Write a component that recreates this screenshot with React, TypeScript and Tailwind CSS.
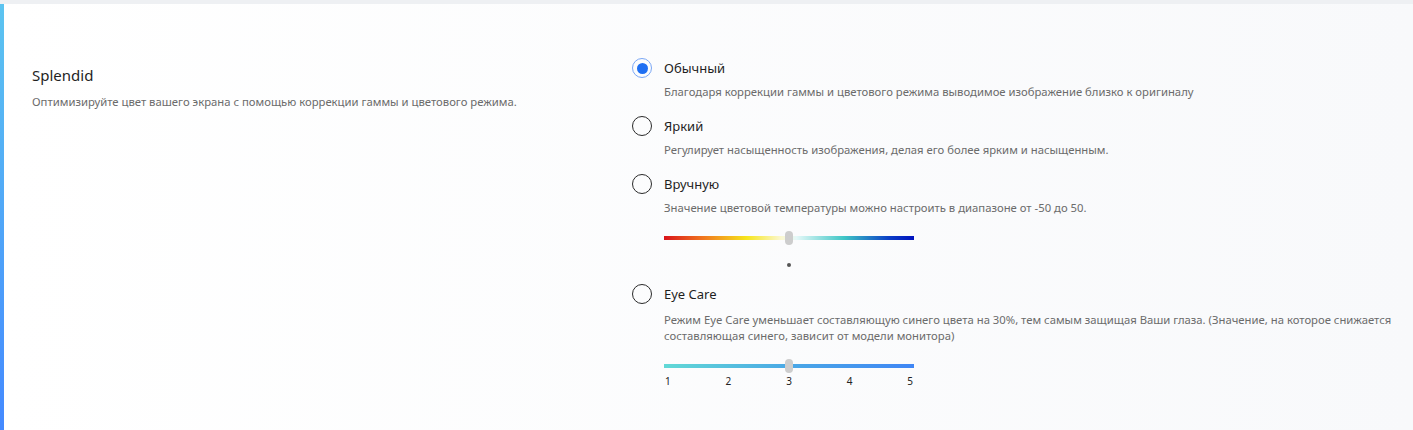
import React from "react";

function Radio({ checked }: { checked?: boolean }) {
  if (checked) {
    return (
      <div className="w-5 h-5 rounded-full border border-[#7aa7f5] flex items-center justify-center shrink-0">
        <div className="w-[11px] h-[11px] rounded-full bg-[#1f6ff2]" />
      </div>
    );
  }
  return <div className="w-5 h-5 rounded-full border border-[#2a2a2a] shrink-0" />;
}

function OptionHead({ label, checked }: { label: string; checked?: boolean }) {
  return (
    <div className="flex items-center gap-3 h-5">
      <Radio checked={checked} />
      <span className="text-[13px] leading-5 text-[#1f1f1f]">{label}</span>
    </div>
  );
}

function Desc({ children, className = "" }: { children: React.ReactNode; className?: string }) {
  return <div className={"ml-8 text-[11.3px] leading-4 text-[#6b6b6b] " + className}>{children}</div>;
}

function Handle() {
  return <div className="absolute left-[121px] top-0 w-2 h-[14px] rounded-full bg-[#cdcdcd]" />;
}

export default function App() {
  return (
    <div className="w-[1413px] h-[430px] bg-[#eef0f3] pt-1" style={{ fontFamily: '"Noto Sans", "Open Sans", sans-serif' }}>
      <div className="h-[426px] flex bg-[linear-gradient(to_right,#ffffff,#f8f9fb)]">
        <div className="w-1 bg-[linear-gradient(to_bottom,#5cc4f0,#4489ff)]" />
        <div className="w-[628px] pl-7 pt-[61px]">
          <div className="text-[15px] leading-5 text-[#1f1f1f]">Splendid</div>
          <div className="mt-[9px] text-[11.3px] leading-4 text-[#6b6b6b]">
            Оптимизируйте цвет вашего экрана с помощью коррекции гаммы и цветового режима.
          </div>
        </div>
        <div className="flex-1 pt-[54px]">
          <OptionHead label="Обычный" checked />
          <Desc className="mt-[6px]">
            Благодаря коррекции гаммы и цветового режима выводимое изображение близко к оригиналу
          </Desc>

          <div className="mt-4">
            <OptionHead label="Яркий" />
          </div>
          <Desc className="mt-[6px]">
            Регулирует насыщенность изображения, делая его более ярким и насыщенным.
          </Desc>

          <div className="mt-4">
            <OptionHead label="Вручную" />
          </div>
          <Desc className="mt-[6px]">
            Значение цветовой температуры можно настроить в диапазоне от -50 до 50.
          </Desc>
          <div className="ml-8 mt-[15px] relative w-[250px] h-[14px]">
            <div className="absolute left-0 right-0 top-[5px] h-1 bg-[linear-gradient(to_right,#d9141b_0%,#f0721f_15%,#f6e51c_33%,#fbf8d2_47%,#e4f8f8_53%,#3ec6c6_72%,#0b3fc6_90%,#0012bf_100%)]" />
            <Handle />
          </div>
          <div className="ml-8 w-[250px] mt-[18px] flex justify-center">
            <div className="w-1 h-1 rounded-full bg-[#555]" />
          </div>

          <div className="mt-[17px]">
            <OptionHead label="Eye Care" />
          </div>
          <Desc className="mt-[8px]">
            Режим Eye Care уменьшает составляющую синего цвета на 30%, тем самым защищая Ваши глаза. (Значение, на которое снижается
            <br />
            составляющая синего, зависит от модели монитора)
          </Desc>
          <div className="ml-8 mt-[15px] relative w-[250px] h-[14px]">
            <div className="absolute left-0 right-0 top-[5px] h-1 bg-[linear-gradient(to_right,#62d9d6,#4aa8e6_50%,#3f86f5)]" />
            <Handle />
          </div>
          <div className="ml-8 mt-[2px] w-[250px] flex justify-between text-[10px] leading-3 text-[#222] px-[1px]">
            <span>1</span>
            <span>2</span>
            <span>3</span>
            <span>4</span>
            <span>5</span>
          </div>
        </div>
      </div>
    </div>
  );
}
